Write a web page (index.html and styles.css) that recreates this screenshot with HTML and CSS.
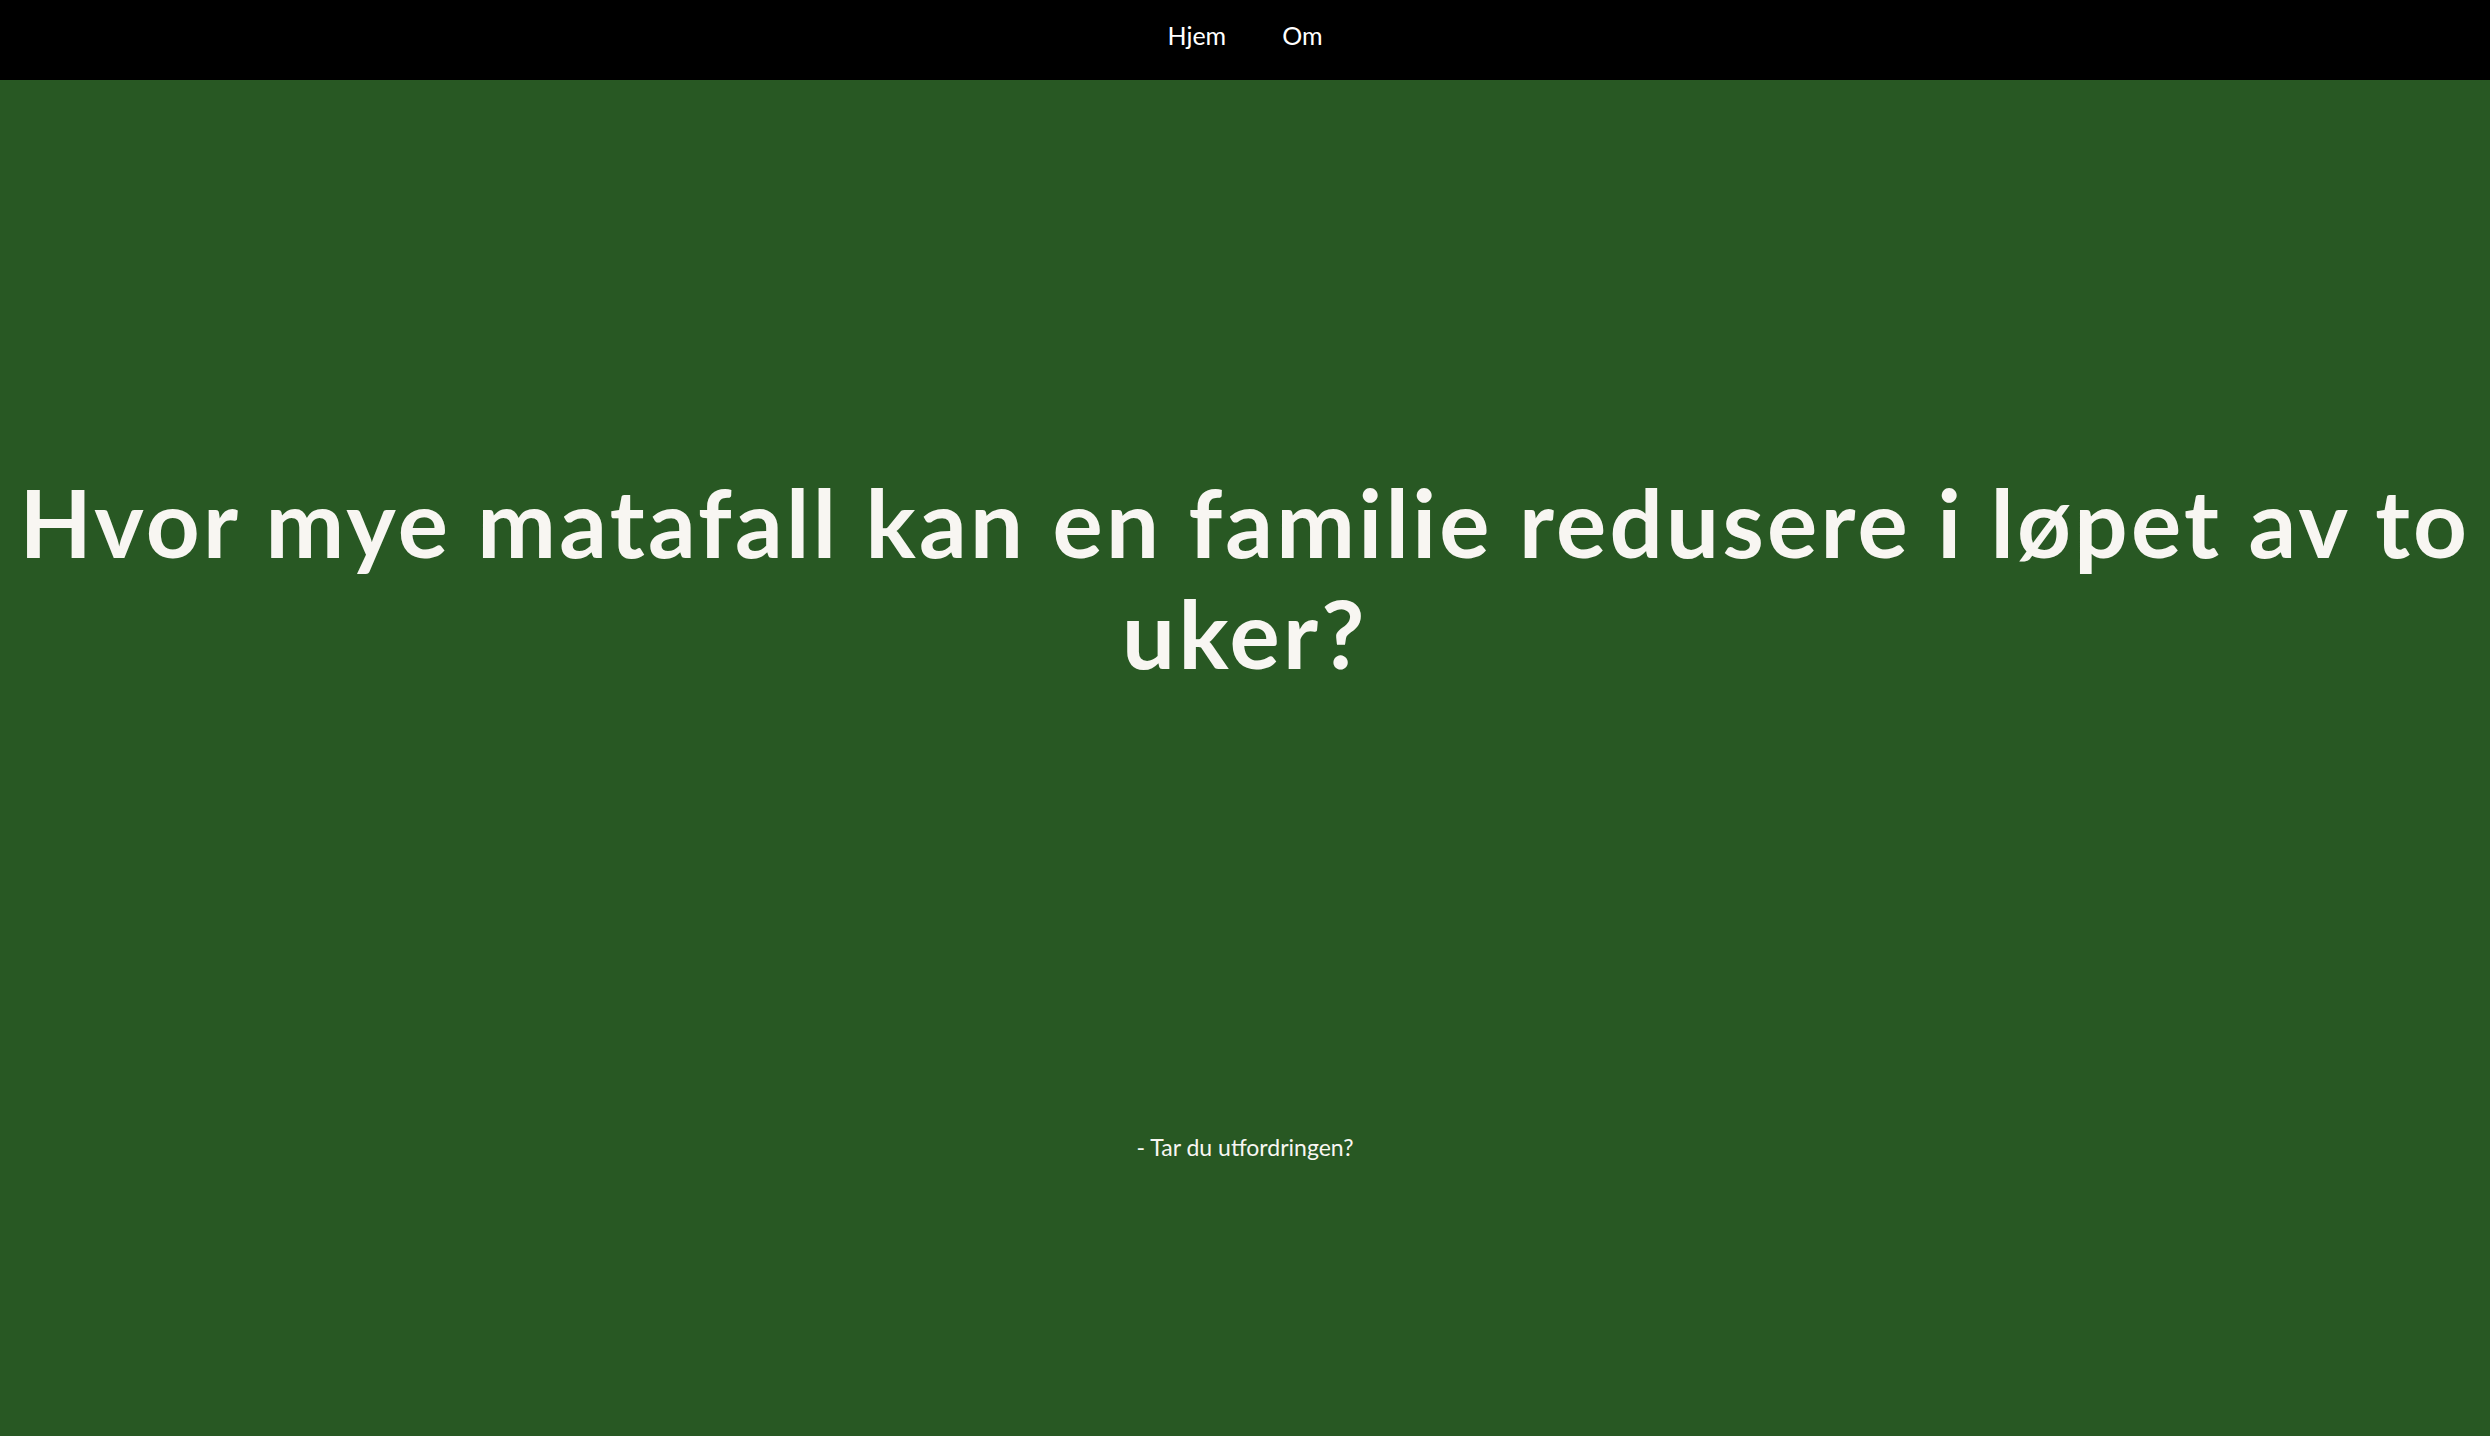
FILE: index.html
```html
<!DOCTYPE html>
<html lang="no">
<head>
<meta charset="utf-8">
<title>Matavfall</title>
<link rel="stylesheet" href="styles.css">
</head>
<body>
<nav class="topnav">
  <a class="navlink" href="#">Hjem</a>
  <a class="navlink" href="#">Om</a>
</nav>
<main class="hero">
  <h1 class="title">Hvor mye matafall kan en familie redusere i løpet av to uker?</h1>
  <p class="tagline">- Tar du utfordringen?</p>
</main>
</body>
</html>
```
FILE: styles.css
```css
html, body {
  margin: 0;
  padding: 0;
}
body {
  background: #285823;
  color: #f8f6f2;
  font-family: "Lato", "Open Sans", sans-serif;
  min-height: 1436px;
}
.topnav {
  background: #000;
  height: 80px;
  display: flex;
  justify-content: center;
  align-items: flex-start;
  gap: 56px;
  padding-top: 20px;
  box-sizing: border-box;
}
.navlink {
  color: #fff;
  text-decoration: none;
  font-size: 25px;
  line-height: 31px;
}
.hero {
  display: flex;
  flex-direction: column;
  align-items: center;
}
.title {
  margin: 386px 0 0;
  font-size: 94px;
  line-height: 111px;
  font-weight: 700;
  letter-spacing: 3.3px;
  text-align: center;
}
.tagline {
  margin: 444px 0 0;
  font-size: 23px;
  line-height: 31px;
}
```
